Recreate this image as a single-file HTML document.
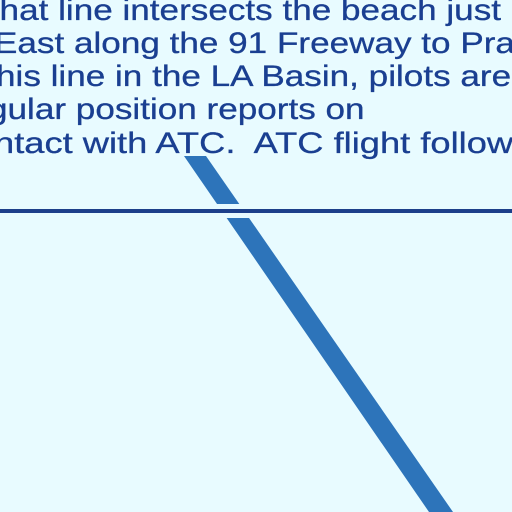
<!DOCTYPE html>
<html><head><style>
html,body{margin:0;padding:0;}
body{width:512px;height:512px;background:#e8fbff;position:relative;overflow:hidden;}
.t{position:absolute;left:0;font-family:"Liberation Sans",Arial,sans-serif;font-size:30px;color:#1a3f91;white-space:pre;line-height:33px;
transform:scaleX(1.17);transform-origin:0 0;-webkit-text-stroke:0.3px #1a3f91;
text-shadow:0 0 3px #e8fbff,0 0 3px #e8fbff,0 0 3px #e8fbff,0 0 2px #e8fbff;}
</style></head><body>
<svg width="512" height="512" style="position:absolute;left:0;top:0">
<polygon points="184,156 206,156 453,512 429,512" fill="#2d74ba"/>
<rect x="0" y="204" width="512" height="14" fill="#e8fbff"/>
<rect x="0" y="209" width="512" height="4" fill="#1c3f8a"/>
</svg>
<div class="t" style="top:-6px;left:-18px">vhat line intersects the beach just</div>
<div class="t" style="top:27px;left:-6px">East along the 91 Freeway to Pra</div>
<div class="t" style="top:60px;left:-4px">his line in the LA Basin, pilots are</div>
<div class="t" style="top:93px;left:-12px">gular position reports on</div>
<div class="t" style="top:127px;left:-6px;transform:scaleX(1.21)">ntact with ATC.  ATC flight follow</div>
</body></html>
